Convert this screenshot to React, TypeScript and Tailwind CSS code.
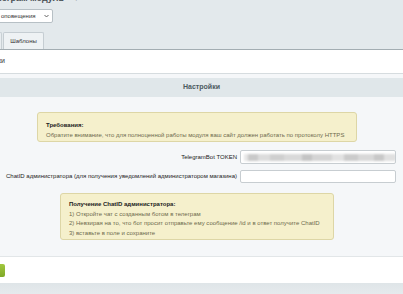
import React from 'react';

const tokenBlocks = [
  { w: 4, c: '#e6e6e6' },
  { w: 10, c: '#c9c9c9' },
  { w: 12, c: '#dcdcdc' },
  { w: 14, c: '#cfcfcf' },
  { w: 18, c: '#d9d9d9' },
  { w: 10, c: '#c4c4c4' },
  { w: 20, c: '#d4d4d4' },
  { w: 12, c: '#e2e2e2' },
  { w: 14, c: '#cbcbcb' },
  { w: 16, c: '#d8d8d8' },
  { w: 10, c: '#c8c8c8' },
  { w: 12, c: '#e0e0e0' },
];

const App = () => {
  return (
    <div className="w-[403px] h-[294px] overflow-hidden bg-[#e3e9ec] text-[#333] font-['Liberation_Sans',Arial,sans-serif]">
      {/* ================= TOP TOOLBAR ================= */}
      <div className="h-[49px] flex flex-col">
        <div className="h-[4px] overflow-hidden">
          <div className="-mt-[7px] ml-[-14px] text-[9px] font-bold text-[#4c5257] leading-[11px]">
            Телеграм модуль <span className="ml-2 font-normal text-[#8a9399]">▾</span>
          </div>
        </div>

        {/* select */}
        <div className="mt-[5px] ml-[-3px] w-[56px] h-[14px] bg-white border border-[#b7c0c5] rounded-[2px] flex items-center justify-between pl-[3px] pr-[3px]">
          <span className="text-[6px] text-[#333] leading-none">оповещения</span>
          <svg width="5" height="4" viewBox="0 0 5 4" className="text-[#555]">
            <path d="M0.5 1 L2.5 3 L4.5 1" fill="none" stroke="currentColor" strokeWidth="0.9" />
          </svg>
        </div>

        {/* tabs */}
        <div className="mt-auto flex items-end gap-[1px]">
          <div className="w-[2px] h-[17px] bg-[#e8edf0] border-r border-t border-[#c8d0d4] rounded-tr-[2px]" />
          <div className="w-[41px] h-[17px] bg-[#eef2f4] border border-b-0 border-[#c5cdd2] rounded-t-[2px] flex items-center justify-center text-[6px] text-[#333]">
            Шаблоны
          </div>
        </div>
      </div>

      {/* ================= TITLE STRIP ================= */}
      <div className="border-t border-[#a3adb2] bg-white h-[24px] flex items-center">
        <span className="ml-[-2px] text-[7px] text-[#333]">ки</span>
      </div>

      {/* ================= SETTINGS PANEL ================= */}
      <div className="border-t border-[#d6dcdf] bg-[#f5f7f9] h-[183px] pt-[4px]">
        <div className="h-[19px] bg-[#e0e7ea] flex items-center justify-center text-[7px] font-bold text-[#4b5a60]">
          Настройки
        </div>

        {/* requirements note */}
        <div className="mt-[15px] ml-[37px] w-[320px] h-[30px] bg-[#f5f0cc] border border-[#ddd6a6] rounded-[3px] pl-[8px] pt-[7px] leading-[10px] text-[6px]">
          <div className="font-bold text-[#222]">Требования:</div>
          <div className="text-[#6d6a4c] whitespace-nowrap">
            Обратите внимание, что для полноценной работы модуля ваш сайт должен работать по протоколу HTTPS
          </div>
        </div>

        {/* fields */}
        <div className="mt-[8px] flex flex-col gap-[6px]">
          <div className="flex items-center">
            <div className="w-[240px] pr-[3px] text-right text-[6px] text-[#222]">TelegramBot TOKEN</div>
            <div className="w-[156px] h-[14px] bg-white border border-[#c7cdd1] rounded-[2px] flex items-center px-[3px] overflow-hidden">
              <div className="flex h-[7px] blur-[1px]">
                {tokenBlocks.map((b, i) => (
                  <div key={i} style={{ width: b.w, backgroundColor: b.c }} />
                ))}
              </div>
            </div>
          </div>
          <div className="flex items-center">
            <div className="w-[240px] pr-[3px] text-right text-[6px] text-[#222] whitespace-nowrap">
              ChatID администратора (для получения уведомлений администратором магазина)
            </div>
            <div className="w-[156px] h-[13px] bg-white border border-[#c7cdd1] rounded-[2px]" />
          </div>
        </div>

        {/* chat id note */}
        <div className="mt-[10px] ml-[60px] w-[274px] h-[47px] bg-[#f5f0cc] border border-[#ddd6a6] rounded-[3px] pl-[8px] pt-[6px] leading-[9.6px] text-[6px]">
          <div className="font-bold text-[#222]">Получение ChatID администратора:</div>
          <div className="text-[#6d6a4c]">1) Откройте чат с созданным ботом в телеграм</div>
          <div className="text-[#6d6a4c] whitespace-nowrap">2) Невзирая на то, что бот просит отправьте ему сообщение /id и в ответ получите ChatID</div>
          <div className="text-[#6d6a4c]">3) вставьте в поле и сохраните</div>
        </div>
      </div>

      {/* ================= BUTTON BAR ================= */}
      <div className="border-t border-[#e2e6e8] bg-white h-[27px] flex items-center">
        <div className="w-[5px] h-[13px] rounded-r-[2px] bg-gradient-to-b from-[#a1c83e] to-[#7fa827]" />
      </div>
      <div className="h-[12px] bg-gradient-to-b from-[#dfe5e8] to-[#e6ebee]" />
    </div>
  );
};

export default App;
